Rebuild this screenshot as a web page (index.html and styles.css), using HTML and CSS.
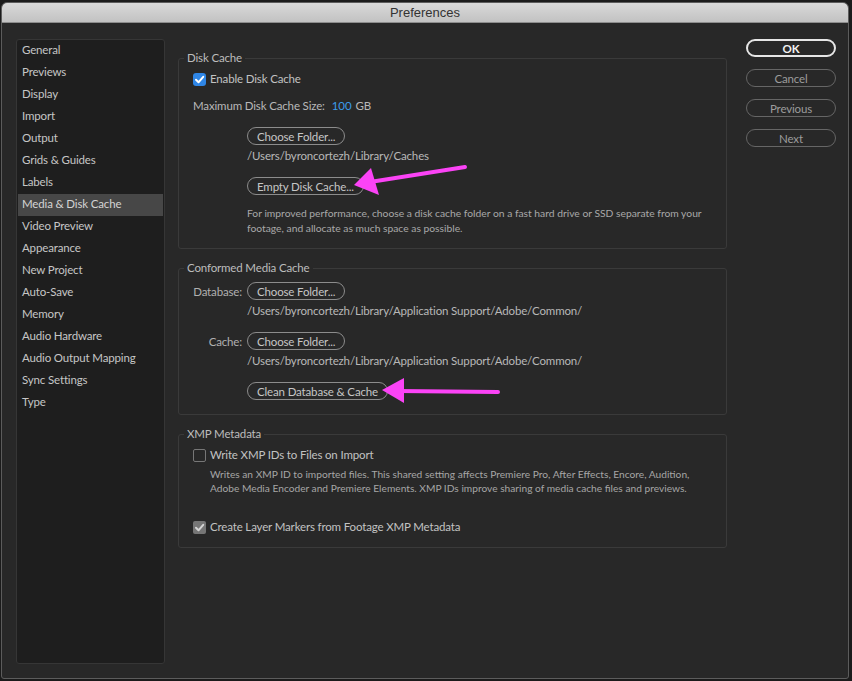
FILE: index.html
```html
<!DOCTYPE html>
<html>
<head>
<meta charset="utf-8">
<title>Preferences</title>
<link rel="stylesheet" href="styles.css">
</head>
<body>
<div class="window">
  <div class="titlebar">Preferences</div>
  <div class="content">
    <nav class="sidebar">
      <div class="nav-item">General</div>
      <div class="nav-item">Previews</div>
      <div class="nav-item">Display</div>
      <div class="nav-item">Import</div>
      <div class="nav-item">Output</div>
      <div class="nav-item">Grids &amp; Guides</div>
      <div class="nav-item">Labels</div>
      <div class="nav-item selected">Media &amp; Disk Cache</div>
      <div class="nav-item">Video Preview</div>
      <div class="nav-item">Appearance</div>
      <div class="nav-item">New Project</div>
      <div class="nav-item">Auto-Save</div>
      <div class="nav-item">Memory</div>
      <div class="nav-item">Audio Hardware</div>
      <div class="nav-item">Audio Output Mapping</div>
      <div class="nav-item">Sync Settings</div>
      <div class="nav-item">Type</div>
    </nav>

    <main class="main">
      <fieldset class="group group-disk">
        <legend>Disk Cache</legend>
        <div class="gbody">
          <div class="check-row first"><span class="cb cb-blue"><svg viewBox="0 0 13 13"><path d="M3 6.8 L5.5 9.3 L10.2 3.8" /></svg></span>Enable Disk Cache</div>
          <div class="size-row">Maximum Disk Cache Size:<span class="val">100</span>GB</div>
          <div class="indent btn-row gap13"><span class="btn">Choose Folder...</span></div>
          <div class="indent path">/Users/byroncortezh/Library/Caches</div>
          <div class="indent btn-row gap13"><span class="btn">Empty Disk Cache...</span></div>
          <p class="indent desc">For improved performance, choose a disk cache folder on a fast hard drive or SSD separate from your<br>footage, and allocate as much space as possible.</p>
        </div>
      </fieldset>

      <fieldset class="group group-conformed">
        <legend>Conformed Media Cache</legend>
        <div class="gbody">
          <div class="labeled-row first"><span class="lbl">Database:</span><span class="btn">Choose Folder...</span></div>
          <div class="indent path">/Users/byroncortezh/Library/Application Support/Adobe/Common/</div>
          <div class="labeled-row gap13"><span class="lbl">Cache:</span><span class="btn">Choose Folder...</span></div>
          <div class="indent path">/Users/byroncortezh/Library/Application Support/Adobe/Common/</div>
          <div class="indent btn-row gap13"><span class="btn">Clean Database &amp; Cache</span></div>
        </div>
      </fieldset>

      <fieldset class="group group-xmp">
        <legend>XMP Metadata</legend>
        <div class="gbody">
          <div class="check-row first"><span class="cb cb-empty"></span>Write XMP IDs to Files on Import</div>
          <p class="desc xmp-desc">Writes an XMP ID to imported files. This shared setting affects Premiere Pro, After Effects, Encore, Audition,<br>Adobe Media Encoder and Premiere Elements. XMP IDs improve sharing of media cache files and previews.</p>
          <div class="check-row second"><span class="cb cb-gray"><svg viewBox="0 0 13 13"><path d="M3 6.8 L5.5 9.3 L10.2 3.8" /></svg></span>Create Layer Markers from Footage XMP Metadata</div>
        </div>
      </fieldset>
    </main>

    <aside class="actions">
      <span class="abtn ok">OK</span>
      <span class="abtn">Cancel</span>
      <span class="abtn">Previous</span>
      <span class="abtn">Next</span>
    </aside>
  </div>
</div>

<svg class="annot" viewBox="0 0 852 681" width="852" height="681">
  <line x1="465" y1="167" x2="370" y2="182" />
  <polygon points="354,185 371,168 379,195" />
  <line x1="498" y1="392" x2="398" y2="391" />
  <polygon points="382,390 404,378 404,403" />
</svg>
</body>
</html>
```

FILE: styles.css
```css
* { box-sizing: border-box; }

html, body {
  margin: 0;
  padding: 0;
}

body {
  width: 852px;
  height: 681px;
  background: #1b1b1b;
  position: relative;
  overflow: hidden;
  font-family: Lato, "Open Sans", sans-serif;
  font-size: 11.5px;
  letter-spacing: -0.15px;
  color: #bdbdbd;
  padding: 2px 0 0 1px;
}

.window {
  width: 848px;
  height: 677px;
  border: 1px solid #5c5c5c;
  border-radius: 6px 6px 3px 3px;
  overflow: hidden;
  display: flex;
  flex-direction: column;
  background: #282828;
}

.titlebar {
  height: 20px;
  flex: none;
  background: linear-gradient(#d9d9d9, #c2c2c2);
  border-bottom: 1px solid #8d8d8d;
  font-family: "Liberation Sans", Arial, sans-serif;
  font-size: 13px;
  letter-spacing: 0;
  line-height: 19px;
  color: #333;
  text-align: center;
}

.content {
  flex: 1;
  display: grid;
  grid-template-columns: 149px 549px 90px;
  column-gap: 13px;
  padding: 16px 12px 14px 14px;
}

.content .actions { margin-left: 6px; }

/* Sidebar */
.sidebar {
  background: #1e1e1e;
  border: 1px solid #363636;
  border-radius: 3px;
  padding: 0 1px;
}

.nav-item {
  height: 22px;
  line-height: 20px;
  padding-left: 4px;
  color: #c6c6c6;
  white-space: nowrap;
}

.nav-item.selected {
  background: #474747;
  color: #d4d4d4;
}

/* Main groups */
.main {
  margin-top: 11px;
  display: flex;
  flex-direction: column;
  gap: 11px;
  align-self: start;
}

.group {
  margin: 0;
  padding: 0 0 12px 0;
  border: 1px solid #3a3a3a;
  border-radius: 3px;
  min-width: 0;
}

.group legend {
  margin-left: 5px;
  padding: 0 3px;
  line-height: 16px;
  height: 16px;
  color: #bdbdbd;
}

.group-conformed { padding-bottom: 14px; }

.gbody {
  padding-left: 14px;
  display: flex;
  flex-direction: column;
}

.check-row {
  display: flex;
  align-items: center;
  gap: 4px;
  height: 16px;
  line-height: 16px;
  color: #c2c2c2;
}

.check-row.first { margin-top: 5px; }
.check-row.second { margin-top: 24px; }

.cb {
  width: 13px;
  height: 13px;
  border-radius: 3px;
  flex: none;
  display: inline-flex;
}

.cb svg { width: 13px; height: 13px; }
.cb path { fill: none; stroke-width: 2; stroke-linecap: round; stroke-linejoin: round; }

.cb-blue { background: #2f86e6; }
.cb-blue path { stroke: #ffffff; }

.cb-empty {
  border: 1.5px solid #777;
  border-radius: 2px;
}

.cb-gray { background: #767676; border-radius: 2px; }
.cb-gray path { stroke: #d4d4d4; }

.size-row {
  margin-top: 11px;
  line-height: 16px;
  color: #b8b8b8;
}

.size-row .val {
  color: #3c9bea;
  margin: 0 4px 0 7px;
}

.indent { padding-left: 54px; }

.btn-row { display: flex; }
.gap13 { margin-top: 13px; }

.btn {
  display: inline-flex;
  align-items: center;
  height: 18px;
  padding: 0 9px;
  border: 1.5px solid #8c8c8c;
  border-radius: 9px;
  color: #c6c6c6;
  white-space: nowrap;
}

.path {
  margin-top: 3px;
  line-height: 16px;
  color: #b8b8b8;
  white-space: nowrap;
}

.desc {
  margin: 11px 0 0 0;
  font-size: 10.3px;
  letter-spacing: 0;
  line-height: 15px;
  color: #a8a8a8;
  white-space: nowrap;
}

.xmp-desc {
  margin-top: 4px;
  padding-left: 17px;
  line-height: 14px;
  font-size: 10.2px;
  color: #a6a6a6;
}

.labeled-row {
  display: flex;
  align-items: center;
  gap: 5px;
}

.labeled-row.first { margin-top: 6px; }

.lbl {
  width: 49px;
  text-align: right;
  color: #b0b0b0;
}

/* Action buttons */
.actions {
  display: flex;
  flex-direction: column;
  gap: 12px;
  align-self: start;
}

.abtn {
  height: 18px;
  width: 90px;
  border: 1.5px solid #666;
  border-radius: 9px;
  display: flex;
  align-items: center;
  justify-content: center;
  color: #9c9c9c;
}

.abtn.ok {
  border: 2px solid #e6e6e6;
  color: #f2f2f2;
  font-weight: 700;
}

/* Annotation arrows */
.annot {
  position: absolute;
  left: 0;
  top: 0;
  pointer-events: none;
}

.annot line {
  stroke: #fb43f6;
  stroke-width: 4;
  stroke-linecap: round;
}

.annot polygon { fill: #fb43f6; }
```
